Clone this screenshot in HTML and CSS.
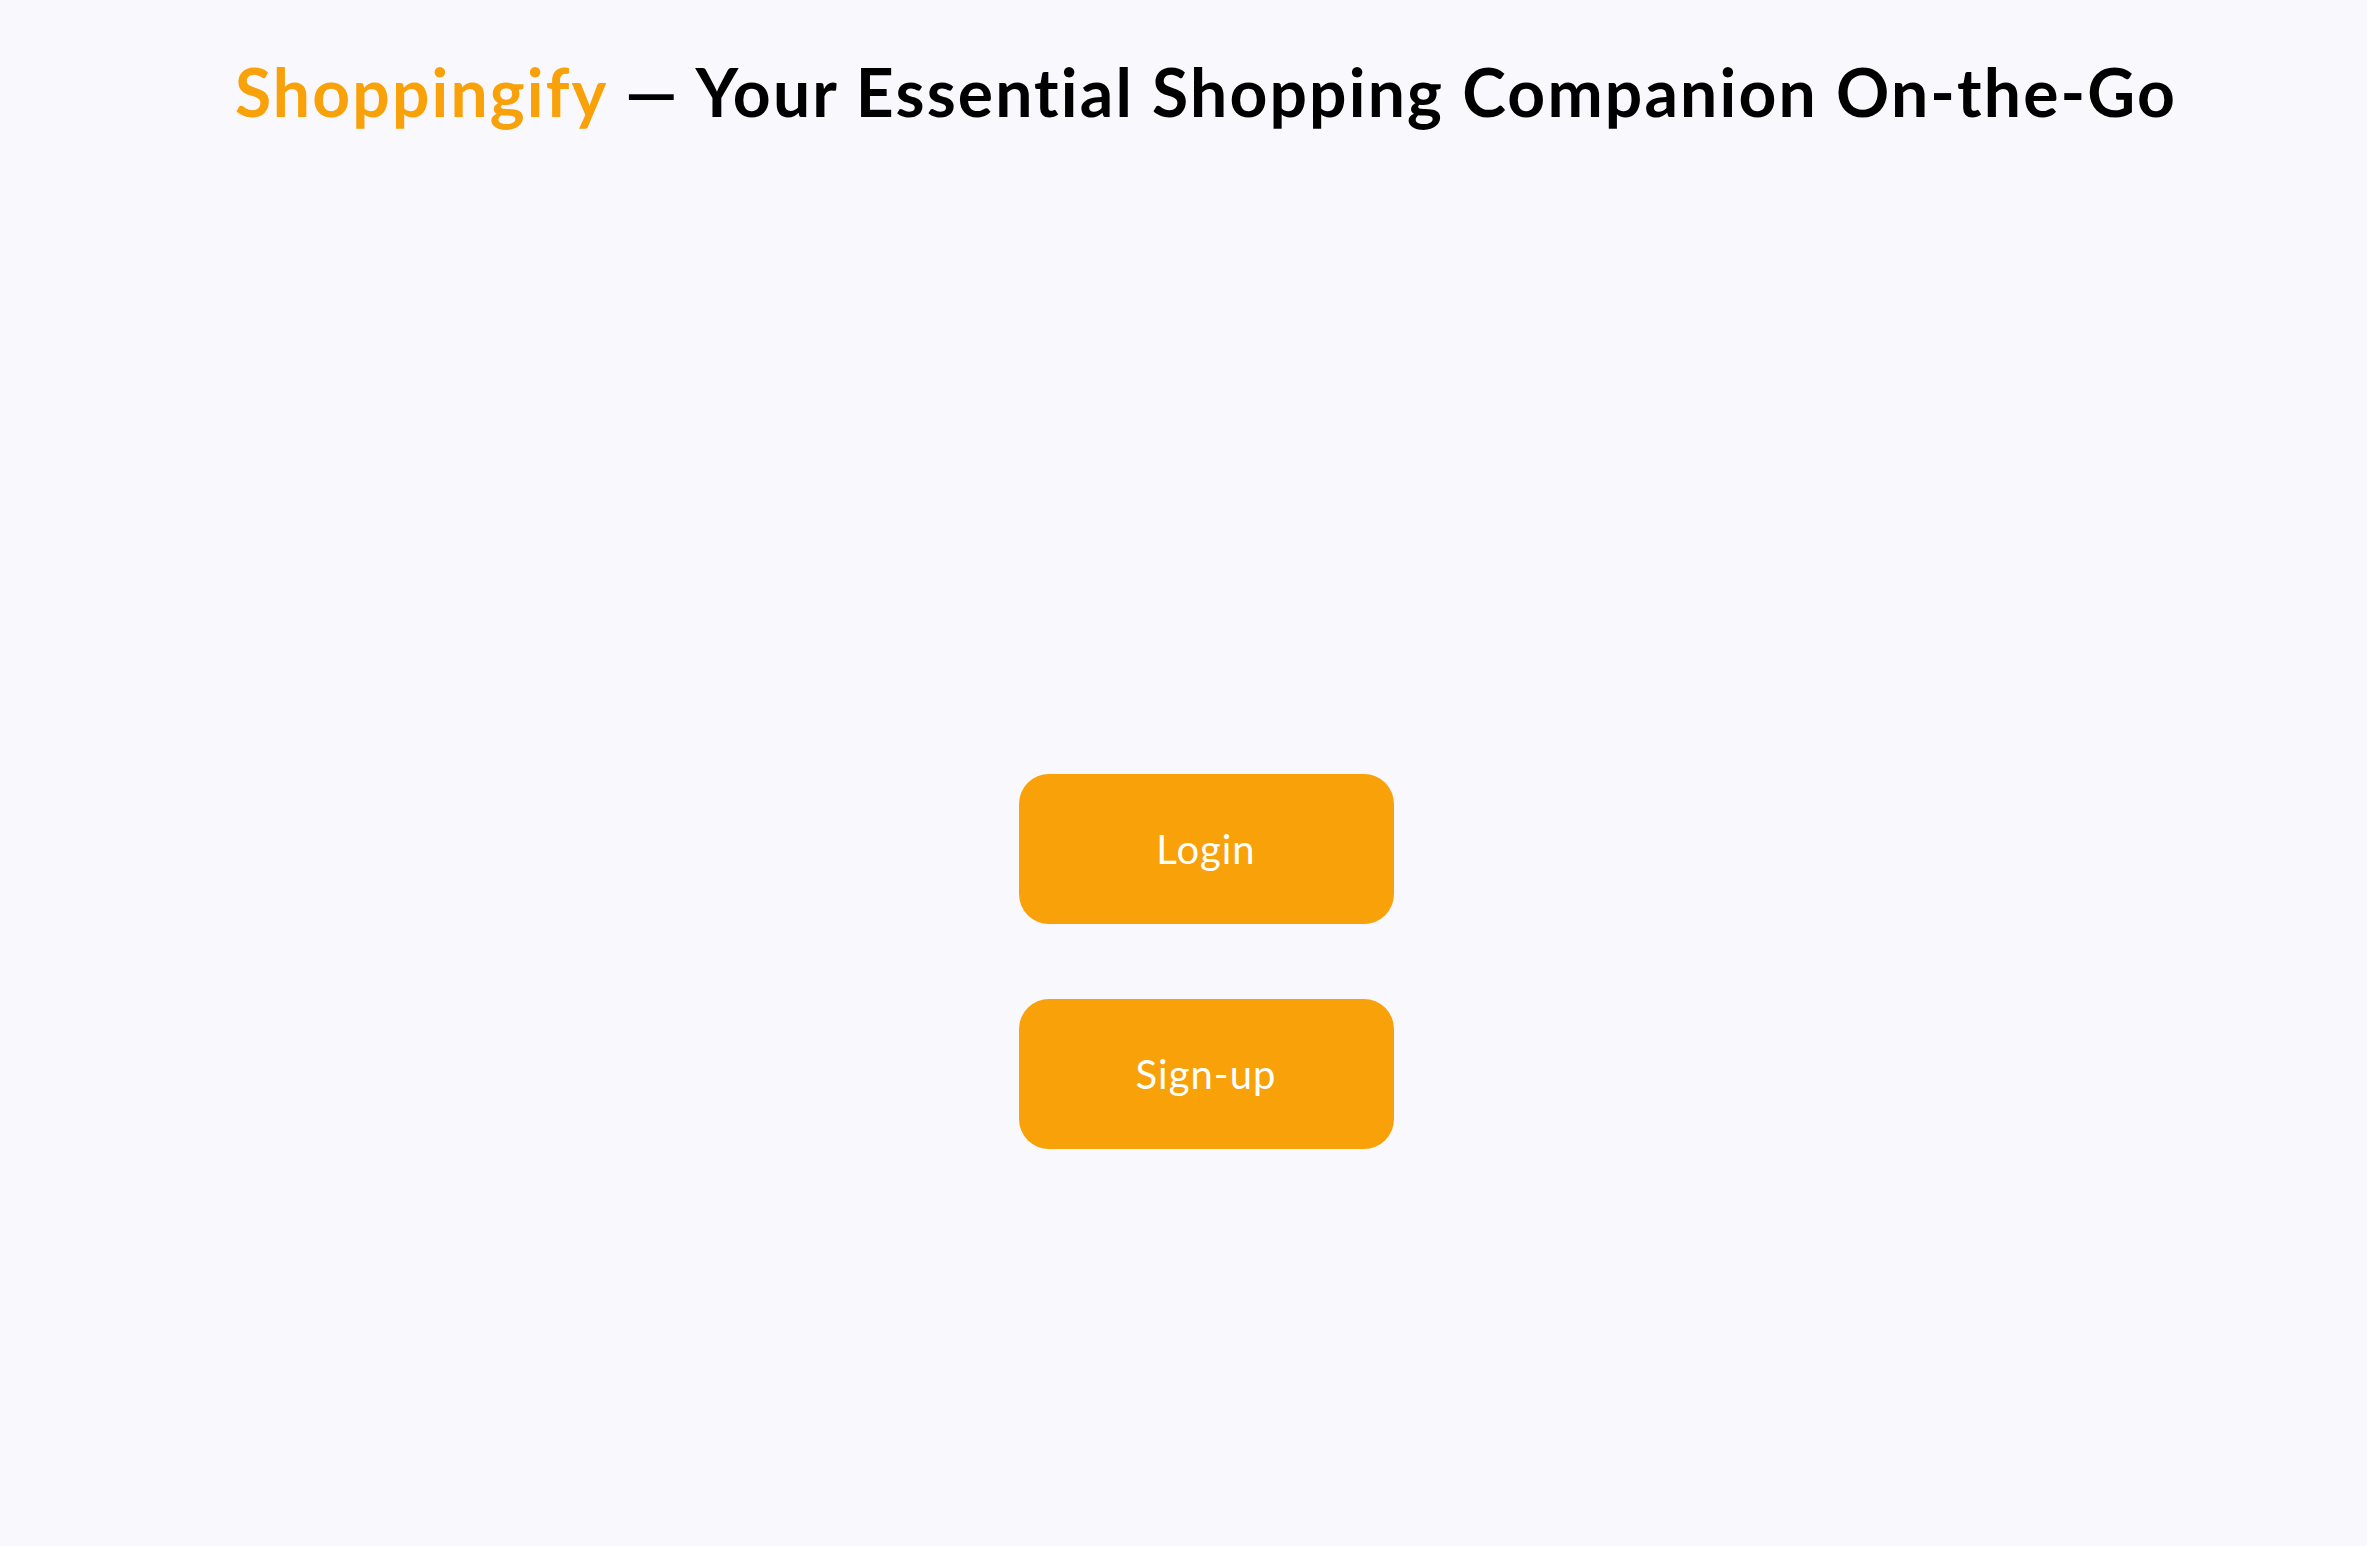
FILE: index.html
```html
<!DOCTYPE html>
<html>
<head>
<meta charset="utf-8">
<link rel="stylesheet" href="styles.css">
<title>Shoppingify</title>
</head>
<body>
<main class="page">
  <h1 class="title"><span class="brand">Shoppingify</span> — Your Essential Shopping Companion On-the-Go</h1>
  <div class="actions">
    <button class="btn">Login</button>
    <button class="btn">Sign-up</button>
  </div>
</main>
</body>
</html>
```
FILE: styles.css
```css
html, body {
  margin: 0;
  padding: 0;
  background: #f9f8fd;
}
.page {
  min-height: 1546px;
  box-sizing: border-box;
  padding-left: 45px;
  display: flex;
  flex-direction: column;
  align-items: center;
  font-family: "Lato", "Noto Sans", sans-serif;
  font-variant-ligatures: none;
}
.title {
  margin: 52px 0 0 0;
  font-size: 66px;
  line-height: 1.2;
  font-weight: 700;
  letter-spacing: 2.15px;
  color: #000;
  white-space: nowrap;
}
.brand {
  color: #f9a109;
}
.actions {
  margin-top: 643px;
  display: flex;
  flex-direction: column;
  gap: 75px;
}
.btn {
  width: 375px;
  height: 150px;
  border: none;
  border-radius: 30px;
  background: #f9a109;
  color: #fff;
  font-family: "Lato", "Noto Sans", sans-serif;
  font-size: 40px;
  font-weight: 400;
  letter-spacing: 1px;
  cursor: pointer;
}
```
